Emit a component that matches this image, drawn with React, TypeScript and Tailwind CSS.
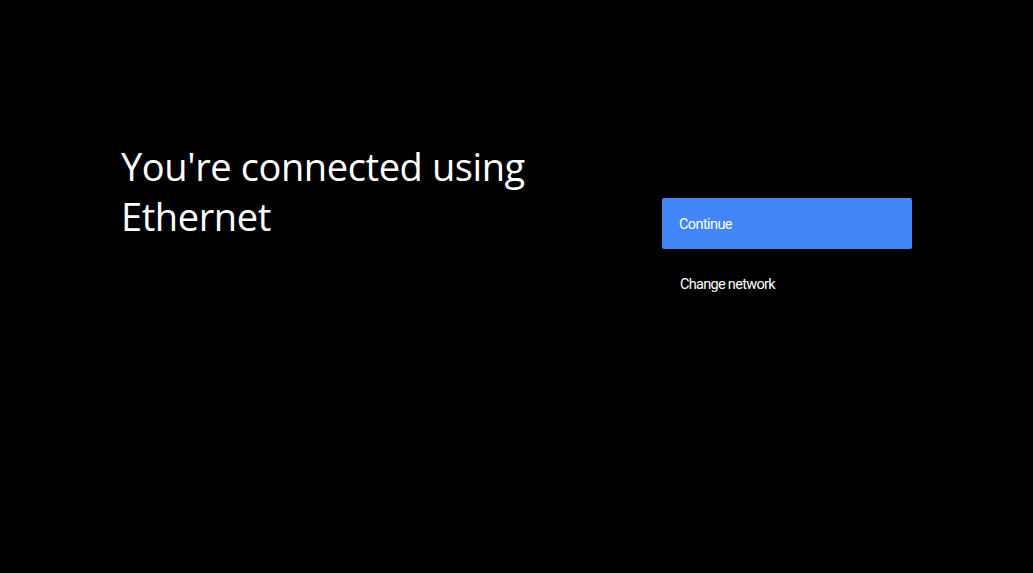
export default function App() {
  return (
    <div className="w-[1033px] h-[573px] bg-black flex">
      <div className="w-[662px] shrink-0 pl-[121px] pt-[141px]">
        <h1 className="w-[440px] text-white text-[38px] leading-[50px] font-normal font-['Open_Sans',sans-serif] tracking-[-0.4px]">
          You&apos;re connected using Ethernet
        </h1>
      </div>
      <div className="w-[250px] pt-[198px] flex flex-col font-['Roboto',sans-serif]">
        <button className="h-[51px] w-[250px] rounded-[2px] bg-[#4285f4] text-white text-[14.5px] text-left pl-[17px] pt-[2px] tracking-[-0.6px]">
          Continue
        </button>
        <button className="h-[72px] text-white text-[14.5px] text-left pl-[18px] tracking-[-0.7px]">
          Change network
        </button>
      </div>
    </div>
  );
}
